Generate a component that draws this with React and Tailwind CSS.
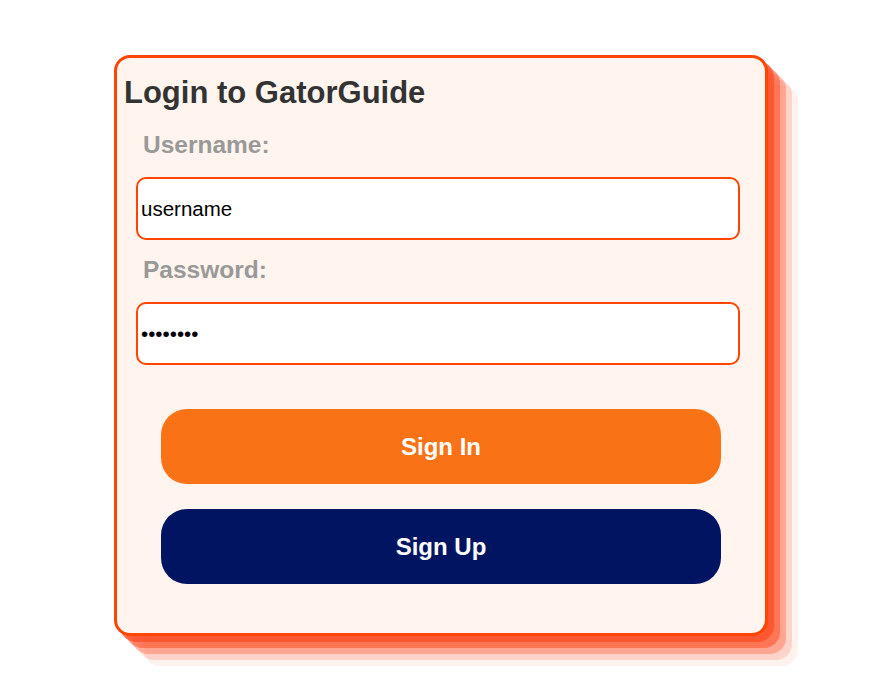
export default function App() {
  return (
    <div className="min-h-[697px] w-[890px] bg-white pt-[55px] pl-[114px] font-['Liberation_Sans',Arial,sans-serif]">
      <div className="w-[654px] h-[581px] rounded-[16px] border-[3px] border-[#ff4500] bg-[#fff5ee] shadow-[6px_6px_0_rgba(255,80,40,0.8),12px_12px_0_rgba(255,80,40,0.55),18px_18px_0_rgba(255,80,40,0.35),24px_24px_0_rgba(255,80,40,0.18),30px_30px_0_rgba(255,80,40,0.08)]">
        <h2 className="mt-[17px] ml-[7px] text-[31px] leading-[36px] font-bold text-[#333]">Login to GatorGuide</h2>
        <form className="flex flex-col">
          <label htmlFor="username" className="mt-[20px] ml-[26px] text-[24.5px] leading-[28px] font-bold text-[#999]">Username:</label>
          <input
            id="username"
            className="mt-[18px] ml-[19px] w-[604px] h-[63px] px-[3px] rounded-[10px] border-2 border-[#ff4500] bg-white text-[20.5px] text-black outline-none"
            defaultValue="username"
          />
          <label htmlFor="password" className="mt-[16px] ml-[26px] text-[24.5px] leading-[28px] font-bold text-[#999]">Password:</label>
          <input
            id="password"
            type="password"
            className="mt-[18px] ml-[19px] w-[604px] h-[63px] px-[3px] rounded-[10px] border-2 border-[#ff4500] bg-white text-[20.5px] text-black outline-none"
            defaultValue="password"
          />
          <div className="mt-[44px] flex flex-col items-center gap-[25px]">
            <button type="button" className="w-[560px] h-[75px] rounded-[26px] bg-[#f97316] text-white text-[24px] font-bold">Sign In</button>
            <button type="button" className="w-[560px] h-[75px] rounded-[26px] bg-[#001462] text-white text-[24px] font-bold">Sign Up</button>
          </div>
        </form>
      </div>
    </div>
  );
}
